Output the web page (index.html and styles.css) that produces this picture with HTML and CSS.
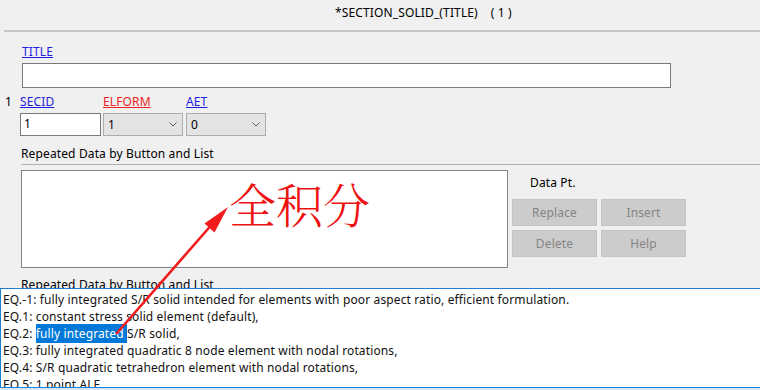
FILE: index.html
```html
<!DOCTYPE html>
<html>
<head>
<meta charset="utf-8">
<link rel="stylesheet" href="styles.css">
</head>
<body>
<div class="page">
  <div class="titlebar">*SECTION_SOLID_(TITLE)&nbsp;&nbsp;&nbsp;&nbsp;( 1 )</div>
  <div class="rule"></div>
  <div class="card">
    <div class="label-row"><span class="lnk">TITLE</span></div>
    <div class="title-input"></div>
    <div class="fields">
      <div class="rownum">1</div>
      <div class="field">
        <span class="lnk">SECID</span>
        <div class="txt">1</div>
      </div>
      <div class="field">
        <span class="lnk red">ELFORM</span>
        <div class="sel"><span>1</span><svg class="chev" width="8" height="5" viewBox="0 0 8 5"><path d="M0.5 0.5 L4 4 L7.5 0.5" fill="none" stroke="#5a5a5a" stroke-width="1"/></svg></div>
      </div>
      <div class="field">
        <span class="lnk">AET</span>
        <div class="sel"><span>0</span><svg class="chev" width="8" height="5" viewBox="0 0 8 5"><path d="M0.5 0.5 L4 4 L7.5 0.5" fill="none" stroke="#5a5a5a" stroke-width="1"/></svg></div>
      </div>
    </div>
    <div class="section-head">Repeated Data by Button and List</div>
    <div class="rep">
      <div class="listbox"></div>
      <div class="side">
        <div class="dp">Data Pt.</div>
        <div class="btns">
          <div class="btn">Replace</div>
          <div class="btn">Insert</div>
          <div class="btn">Delete</div>
          <div class="btn">Help</div>
        </div>
      </div>
    </div>
    <div class="section-head second">Repeated Data by Button and List</div>
  </div>

  <div class="popup">
    <div class="item">EQ.-1: fully integrated S/R solid intended for elements with poor aspect ratio, efficient formulation.</div>
    <div class="item">EQ.1: constant stress solid element (default),</div>
    <div class="item">EQ.2: <span class="hl">fully integrated </span>S/R solid,</div>
    <div class="item">EQ.3: fully integrated quadratic 8 node element with nodal rotations,</div>
    <div class="item">EQ.4: S/R quadratic tetrahedron element with nodal rotations,</div>
    <div class="item">EQ.5: 1 point ALE,</div>
  </div>

  <div class="note">全积分</div>
  <svg class="arrow" width="760" height="390" viewBox="0 0 760 390">
    <line x1="117" y1="333" x2="214" y2="222" stroke="#f21c1c" stroke-width="2.6" stroke-linecap="round"/>
    <polygon points="228,207 214.5,232.5 204.5,223.5" fill="#f21c1c"/>
  </svg>
</div>
</body>
</html>
```

FILE: styles.css
```css
* { box-sizing: border-box; }
html, body { margin: 0; padding: 0; }
body {
  background: #f0f0f0;
  font-family: "Noto Sans", "Open Sans", sans-serif;
  font-size: 12px;
  letter-spacing: 0.13px;
  color: #000;
  width: 760px;
  height: 390px;
  overflow: hidden;
}
.page {
  position: relative;
  width: 760px;
  height: 390px;
  overflow: hidden;
}
.titlebar {
  height: 30px;
  padding-left: 335px;
  padding-top: 5px;
  line-height: 16px;
  white-space: pre;
}
.rule {
  height: 2px;
  margin-left: 4px;
  background: #c6c6c6;
}
.card {
  padding-left: 21px;
}
.lnk {
  color: #1f1fe0;
  text-decoration: underline;
  line-height: 14px;
}
.lnk.red { color: #ee2020; }
.label-row {
  padding-top: 13px;
  padding-left: 1px;
  height: 31px;
  line-height: 14px;
}
.title-input {
  margin-left: 1px;
  width: 649px;
  height: 25px;
  background: #fff;
  border: 1px solid #7a7a7a;
}
.fields {
  display: flex;
  gap: 2px;
  margin-left: -18px;
  padding-top: 7px;
}
.rownum {
  width: 15px;
  padding-left: 2px;
  line-height: 14px;
}
.field {
  display: flex;
  flex-direction: column;
  gap: 4px;
  width: 81px;
}
.field + .field { width: 80px; }
.field + .field + .field { margin-left: 1px; }
.txt {
  height: 23px;
  background: #fff;
  border: 1px solid #7a7a7a;
  padding-left: 3px;
  line-height: 20px;
}
.sel {
  height: 23px;
  background: #e3e3e3;
  border: 1px solid #adadad;
  padding-left: 4px;
  padding-right: 5px;
  line-height: 20px;
  display: flex;
  justify-content: space-between;
  align-items: center;
}
.chev { display: block; }
.section-head {
  margin-top: 10px;
  line-height: 16px;
  height: 19px;
  border-bottom: 1px solid #b0b0b0;
}
.rep {
  display: flex;
  gap: 4px;
  margin-top: 5px;
}
.listbox {
  width: 487px;
  height: 98px;
  background: #fff;
  border: 1px solid #828282;
}
.side {
  display: flex;
  flex-direction: column;
}
.dp {
  padding-left: 18px;
  padding-top: 5px;
  height: 29px;
  line-height: 16px;
}
.btns {
  display: grid;
  grid-template-columns: 85px 85px;
  grid-auto-rows: 27px;
  gap: 4px;
}
.btn {
  background: #cccccc;
  border: 1px solid #c4c4c4;
  color: #848484;
  text-align: center;
  line-height: 25px;
}
.section-head.second {
  margin-top: 9px;
  border-bottom: none;
}
.popup {
  position: absolute;
  left: 0;
  top: 288px;
  width: 770px;
  height: 100px;
  background: #fff;
  border: 1px solid #1c7fd6;
  box-shadow: 0 1px 0 1px #d6e8f7;
  padding-top: 2px;
  padding-left: 2px;
  overflow: hidden;
}
.item {
  height: 17px;
  line-height: 17px;
  white-space: nowrap;
  color: #111;
}
.hl {
  background: #0078d7;
  color: #fff;
  padding: 1px 0;
}
.note {
  position: absolute;
  left: 229px;
  top: 173px;
  font-family: "Noto Serif CJK SC", "Noto Sans CJK SC", serif;
  font-size: 47px;
  line-height: 60px;
  color: #ee1111;
  font-weight: 300;
  letter-spacing: 0;
}
.arrow {
  position: absolute;
  left: 0;
  top: 0;
  pointer-events: none;
}
```
